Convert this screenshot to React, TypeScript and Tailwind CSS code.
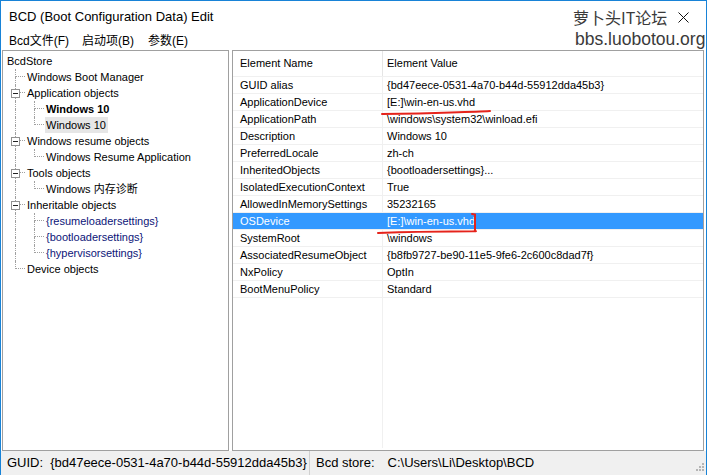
import React from 'react'

type Guide = 'I' | 'T' | 'L'

interface TreeRow {
  label: string
  guides: Guide[]
  box?: boolean
  bold?: boolean
  selected?: boolean
  navy?: boolean
}

const TREE: TreeRow[] = [
  { label: 'BcdStore', guides: [] },
  { label: 'Windows Boot Manager', guides: ['T'] },
  { label: 'Application objects', guides: ['T'], box: true },
  { label: 'Windows 10', guides: ['I', 'T'], bold: true },
  { label: 'Windows 10', guides: ['I', 'L'], selected: true },
  { label: 'Windows resume objects', guides: ['T'], box: true },
  { label: 'Windows Resume Application', guides: ['I', 'L'] },
  { label: 'Tools objects', guides: ['T'], box: true },
  { label: 'Windows 内存诊断', guides: ['I', 'L'] },
  { label: 'Inheritable objects', guides: ['T'], box: true },
  { label: '{resumeloadersettings}', guides: ['I', 'T'], navy: true },
  { label: '{bootloadersettings}', guides: ['I', 'T'], navy: true },
  { label: '{hypervisorsettings}', guides: ['I', 'L'], navy: true },
  { label: 'Device objects', guides: ['L'] },
]

const ELEMENTS: [string, string][] = [
  ['GUID alias', '{bd47eece-0531-4a70-b44d-55912dda45b3}'],
  ['ApplicationDevice', '[E:]\\win-en-us.vhd'],
  ['ApplicationPath', '\\windows\\system32\\winload.efi'],
  ['Description', 'Windows 10'],
  ['PreferredLocale', 'zh-ch'],
  ['InheritedObjects', '{bootloadersettings}...'],
  ['IsolatedExecutionContext', 'True'],
  ['AllowedInMemorySettings', '35232165'],
  ['OSDevice', '[E:]\\win-en-us.vhd'],
  ['SystemRoot', '\\windows'],
  ['AssociatedResumeObject', '{b8fb9727-be90-11e5-9fe6-2c600c8dad7f}'],
  ['NxPolicy', 'OptIn'],
  ['BootMenuPolicy', 'Standard'],
]

const SELECTED_ELEMENT = 'OSDevice'

function GuideCell({ kind, box }: { kind: Guide; box?: boolean }) {
  return (
    <div className="relative w-[19px] h-4 shrink-0 flex flex-col">
      {kind === 'I' ? (
        <div className="h-2 ml-2 border-l border-dotted border-[#a0a0a0]" />
      ) : (
        <div className="h-2 ml-2 w-[10px] border-l border-b border-dotted border-[#a0a0a0]" />
      )}
      {kind !== 'L' && <div className="h-2 ml-2 border-l border-dotted border-[#a0a0a0]" />}
      {box && (
        <div className="absolute left-[4px] top-[4px] w-[9px] h-[9px] border border-[#919191] bg-white flex items-center justify-center">
          <div className="w-[5px] h-px bg-[#222]" />
        </div>
      )}
    </div>
  )
}

function Tree() {
  return (
    <div className="pt-[2px] pl-[4px] text-[11px] leading-4 text-black">
      {TREE.map((row, i) => (
        <div key={i} className="flex h-4 items-center">
          {row.guides.map((g, j) => (
            <GuideCell key={j} kind={g} box={row.box && j === row.guides.length - 1} />
          ))}
          <span
            className={
              (row.guides.length ? 'pl-px pr-[2px] ' : '') +
              (row.bold ? 'font-bold ' : '') +
              (row.selected ? 'bg-[#e6e6e6] ' : '') +
              (row.navy ? 'text-[#0c1478]' : 'text-black')
            }
          >
            {row.label}
          </span>
        </div>
      ))}
    </div>
  )
}

function ElementList() {
  return (
    <div className="text-[11px] text-black">
      <div className="flex h-[26px] items-center border-b border-[#f0f0f0]">
        <div className="w-[150px] h-full flex items-center pl-[7px] border-r border-[#e5e5e5]">Element Name</div>
        <div className="pl-[4px]">Element Value</div>
      </div>
      {ELEMENTS.map(([name, value]) => {
        const sel = name === SELECTED_ELEMENT
        return (
          <div
            key={name}
            className={
              'flex h-[17px] items-center border-b border-[#f0f0f0] ' +
              (sel ? 'bg-[#3399ff] text-white' : '')
            }
          >
            <div
              className={
                'w-[150px] h-full flex items-center pl-[7px] border-r ' +
                (sel ? 'border-[#3399ff]' : 'border-[#f0f0f0]')
              }
            >
              {name}
            </div>
            <div className="pl-[4px] whitespace-nowrap">{value}</div>
          </div>
        )
      })}
      <div className="flex h-[150px]">
        <div className="w-[150px] border-r border-[#f0f0f0]" />
      </div>
    </div>
  )
}

export default function App() {
  return (
    <div className="relative w-[707px] h-[475px] overflow-hidden bg-white border-x border-t border-[#1883d7] flex flex-col font-['Liberation_Sans','Noto_Sans_CJK_SC',sans-serif]">
      {/* title bar */}
      <div className="h-[31px] shrink-0 flex items-center pl-[8px] text-[13px] text-black">
        BCD (Boot Configuration Data) Edit
      </div>

      {/* menu */}
      <div className="h-[18px] shrink-0 flex items-center pl-[8px] text-[12px] text-black">
        <span className="w-[73px]">Bcd文件(F)</span>
        <span className="w-[66px]">启动项(B)</span>
        <span>参数(E)</span>
      </div>

      {/* panes */}
      <div className="h-[401px] shrink-0 flex pl-px pr-[2px]">
        <div className="w-[227px] border border-[#a0a0a0] bg-white overflow-hidden">
          <Tree />
        </div>
        <div className="w-[3px]" />
        <div className="flex-1 border border-[#a0a0a0] bg-white overflow-hidden">
          <ElementList />
        </div>
      </div>

      {/* status bar */}
      <div className="flex-1 flex items-center bg-[#f0f0f0] text-[13px] text-black">
        <div className="w-[309px] h-full flex items-center pl-[6px] border-r border-[#d0d0d0]">
          <span>GUID:</span>
          <span className="ml-[7px]">{'{bd47eece-0531-4a70-b44d-55912dda45b3}'}</span>
        </div>
        <div className="flex items-center pl-[6px]">
          <span>Bcd store:</span>
          <span className="ml-[13px]">C:\Users\Li\Desktop\BCD</span>
        </div>
        <svg className="ml-auto mr-[2px] mt-[10px]" width="10" height="10" viewBox="0 0 10 10">
          {[
            [8, 0], [8, 3], [5, 3], [8, 6], [5, 6], [2, 6],
          ].map(([x, y], i) => (
            <rect key={i} x={x} y={y} width="2" height="2" fill="#b5b5b5" />
          ))}
        </svg>
      </div>

      {/* watermark + close glyph */}
      <div className="absolute left-[572px] top-[6px] text-[16px] leading-5 text-[#3a3a3a] font-['Noto_Sans_CJK_SC',sans-serif] [text-shadow:0_0_2px_#fff]">
        萝卜头IT论坛
      </div>
      <svg className="absolute left-[677px] top-[11px]" width="11" height="11" viewBox="0 0 11 11">
        <path d="M0.5 0.5 L10.5 10.5 M10.5 0.5 L0.5 10.5" stroke="#111" strokeWidth="1" fill="none" />
      </svg>
      <div className="absolute left-[574px] top-[28px] text-[17.5px] leading-5 text-[#3a3a3a] [text-shadow:0_0_2px_#fff]">
        bbs.luobotou.org
      </div>

      {/* red hand annotations */}
      <svg className="absolute left-0 top-0 pointer-events-none" width="707" height="475" viewBox="0 0 707 475">
        <path d="M381 113 Q 420 112.5 450 111.5 T 489 110" stroke="#e5231b" strokeWidth="2" fill="none" strokeLinecap="round" />
        <path d="M377 232 Q 420 230.5 450 230.5 T 474 230" stroke="#e5231b" strokeWidth="2" fill="none" strokeLinecap="round" />
        <path d="M471 213 L 474 213.5 L 474 230" stroke="#e5231b" strokeWidth="2" fill="none" strokeLinecap="round" />
      </svg>
    </div>
  )
}
